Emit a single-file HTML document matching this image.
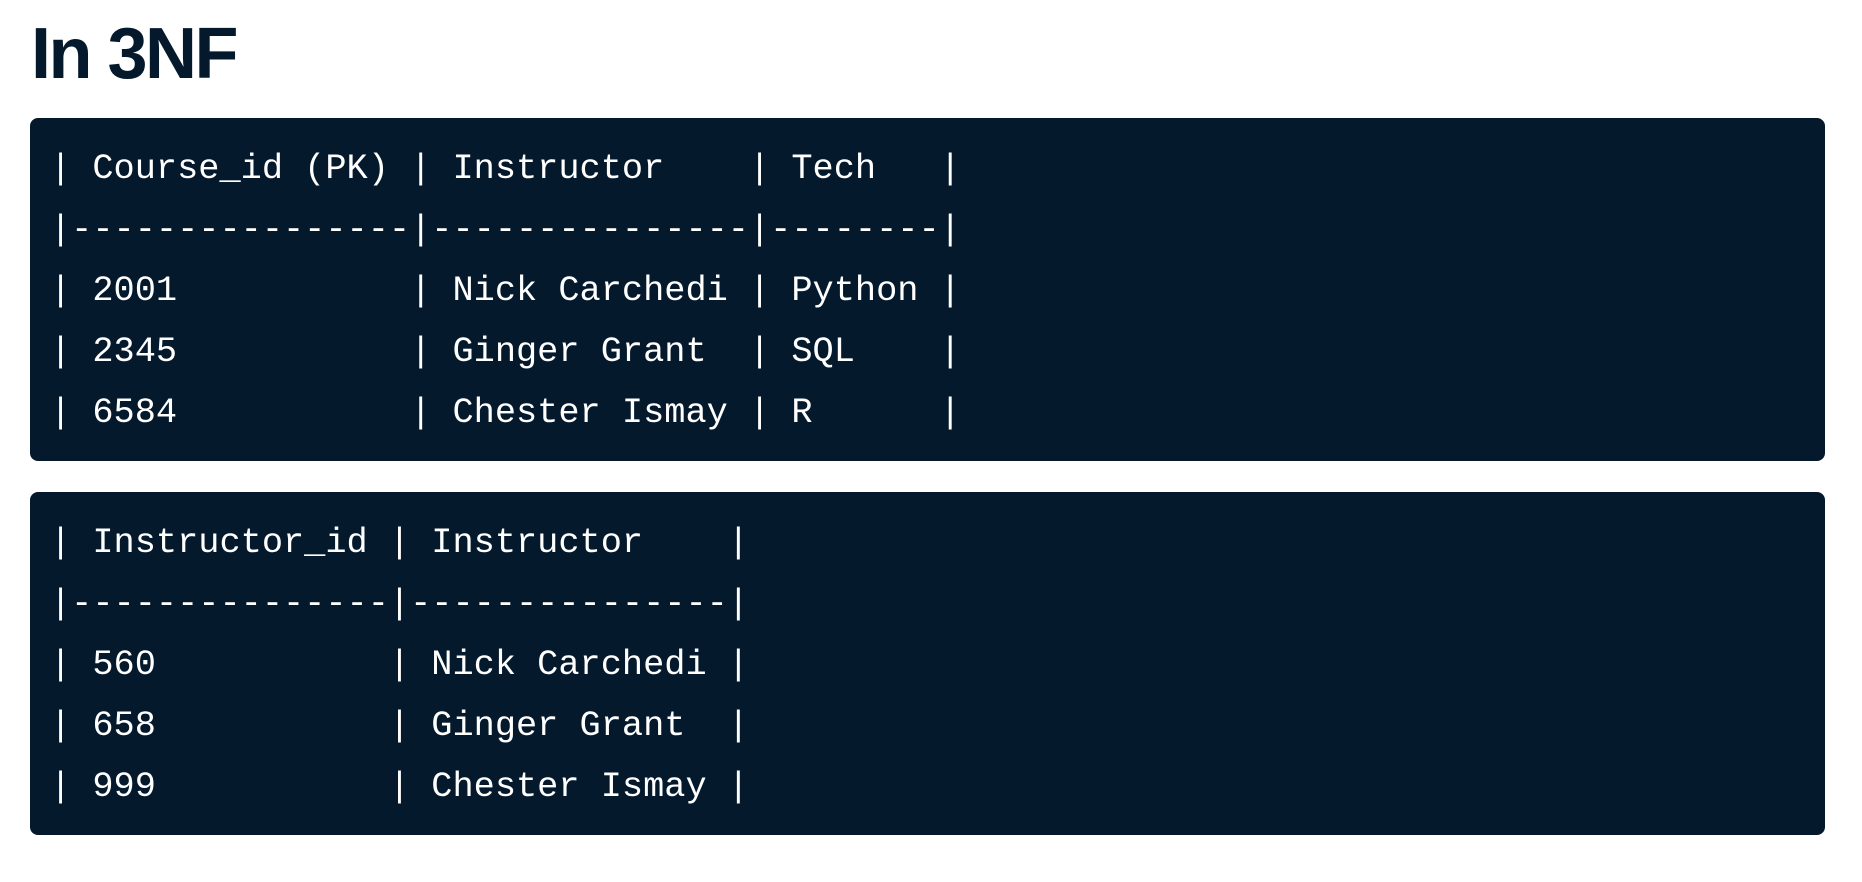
<!DOCTYPE html>
<html><head><style>
html,body{margin:0;padding:0;background:#fff;width:1862px;height:882px;overflow:hidden}
h1{position:absolute;left:31px;top:14px;margin:0;font:bold 72px/80px "Liberation Sans",sans-serif;color:#05192d;letter-spacing:-2.5px}
pre{position:absolute;left:30px;width:1795px;margin:0;box-sizing:border-box;background:#05192d;color:#fff;border-radius:8px;
font:35.3px/61px "Liberation Mono",monospace;padding:21px 20px 17px;height:343px}
</style></head><body>
<h1>In 3NF</h1>
<pre style="top:118px">| Course_id (PK) | Instructor    | Tech   |
|----------------|---------------|--------|
| 2001           | Nick Carchedi | Python |
| 2345           | Ginger Grant  | SQL    |
| 6584           | Chester Ismay | R      |</pre>
<pre style="top:492px">| Instructor_id | Instructor    |
|---------------|---------------|
| 560           | Nick Carchedi |
| 658           | Ginger Grant  |
| 999           | Chester Ismay |</pre>
</body></html>
